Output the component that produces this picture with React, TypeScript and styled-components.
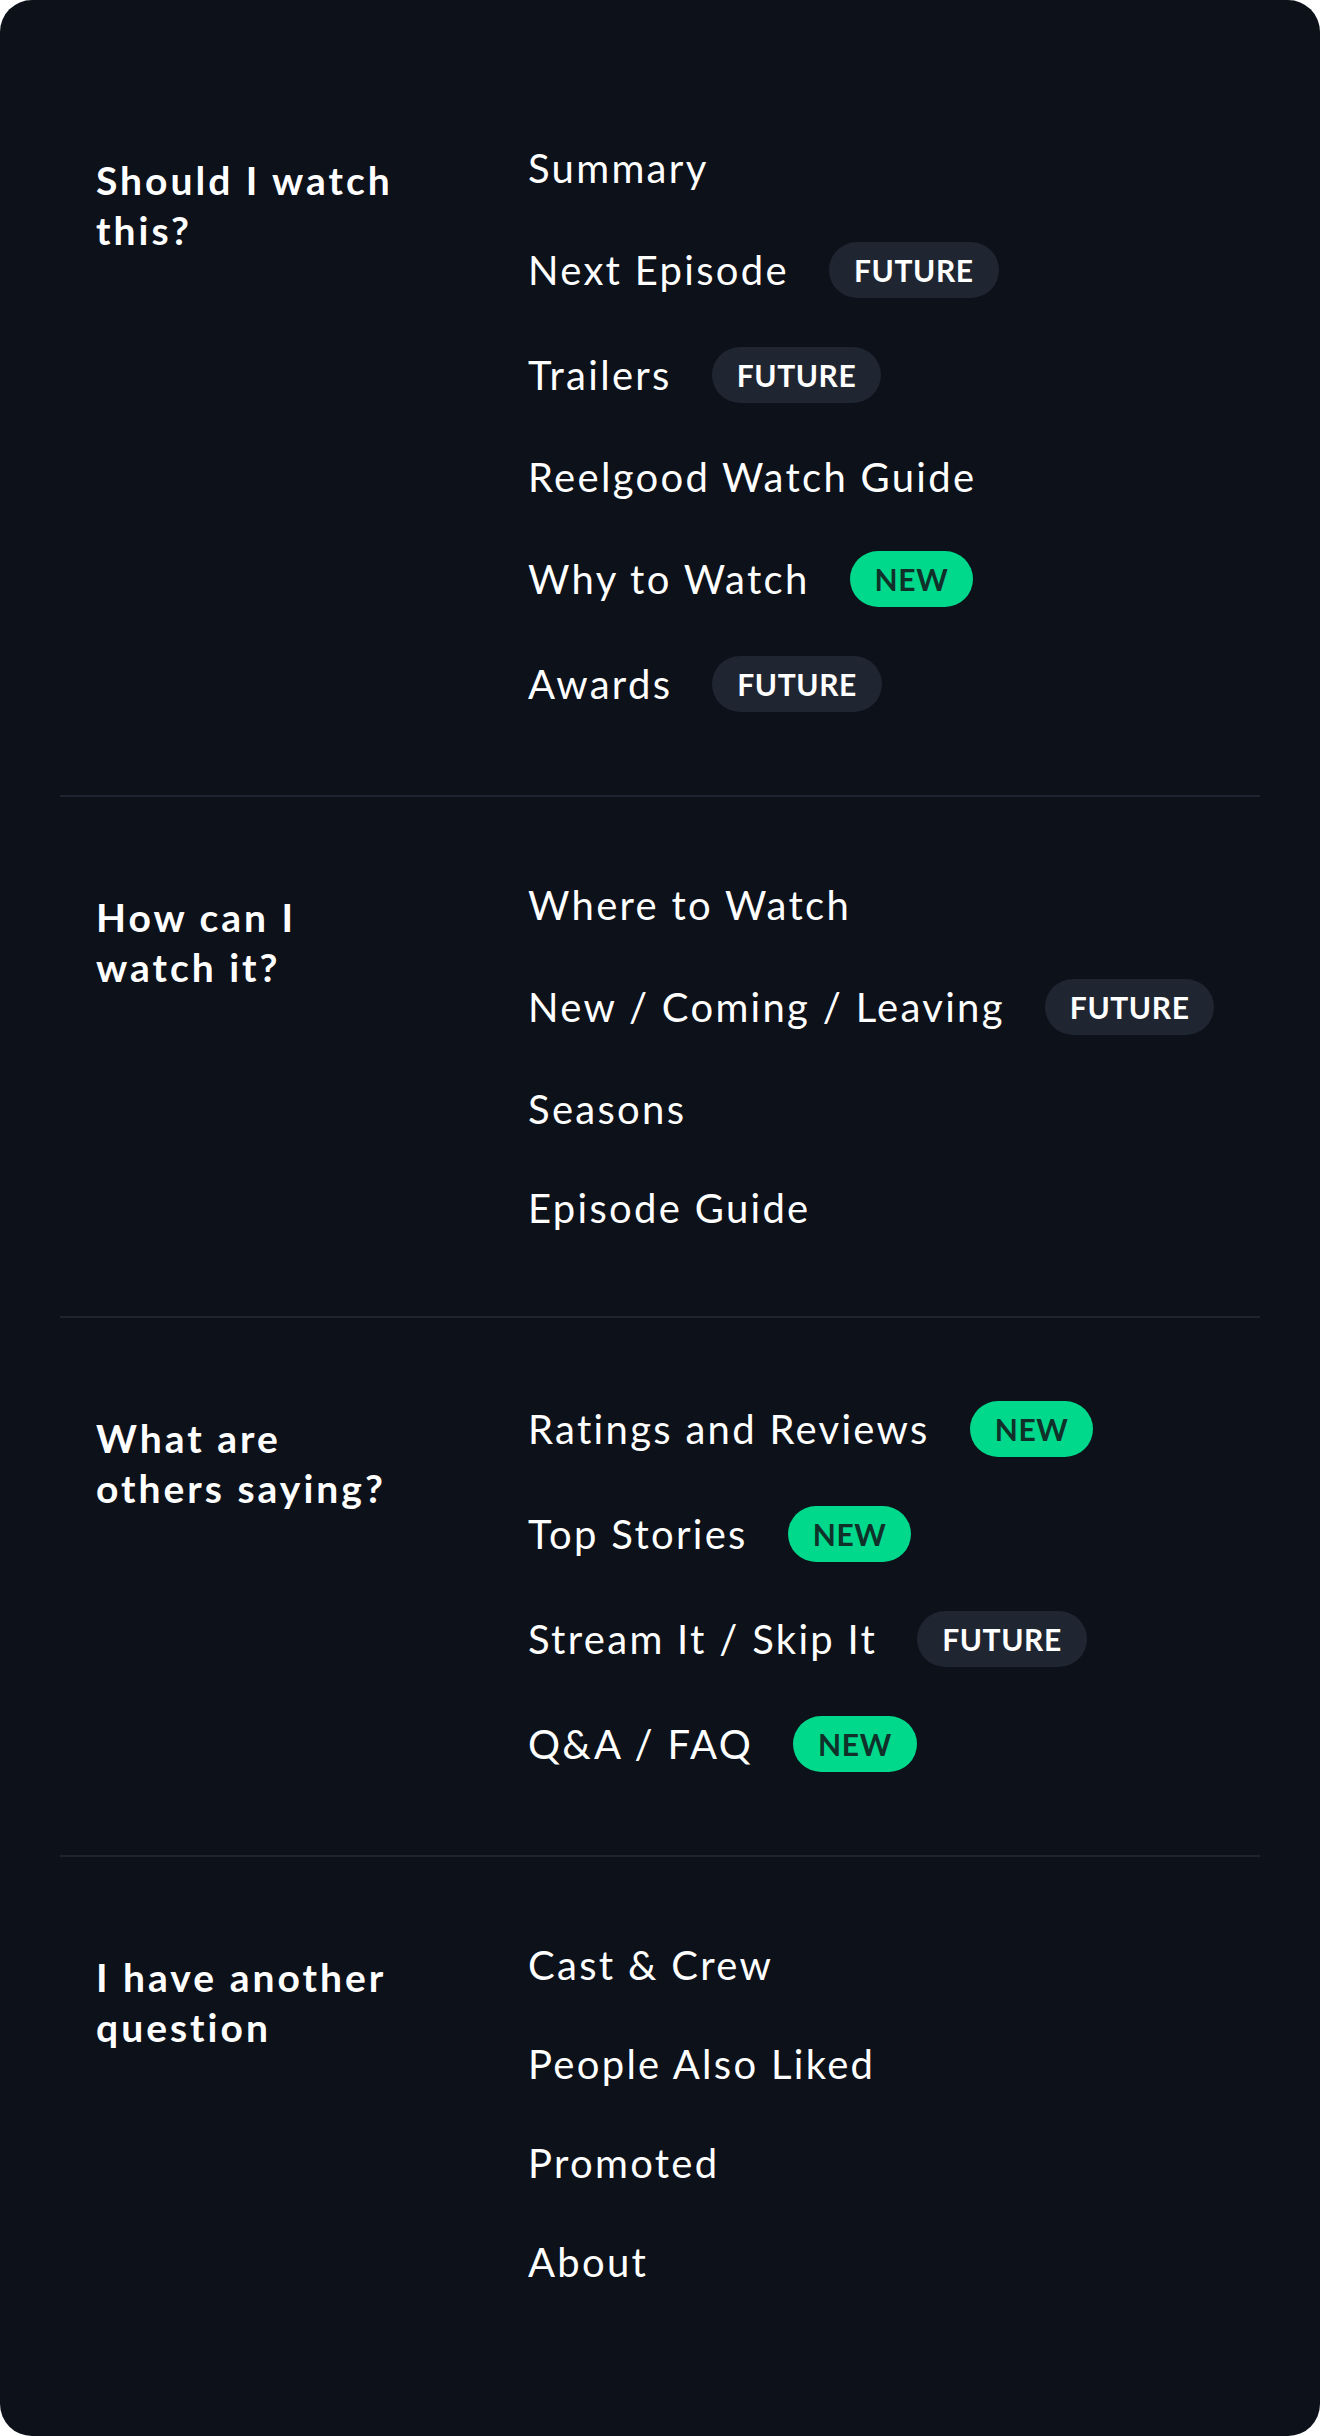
import React from 'react';
import styled, { createGlobalStyle } from 'styled-components';

const GlobalStyle = createGlobalStyle`
    html, body {
        margin: 0;
        padding: 0;
        background: #ffffff;
    }
    body {
        font-family: Lato, "Open Sans", sans-serif;
        -webkit-font-smoothing: antialiased;
    }
`;

type BadgeKind = 'new' | 'future';

interface NavItem {
    label: string;
    badge?: BadgeKind;
}

interface NavSection {
    title: string;
    items: NavItem[];
}

const SECTIONS: NavSection[] = [
    {
        title: 'Should I watch\nthis?',
        items: [
            { label: 'Summary' },
            { label: 'Next Episode', badge: 'future' },
            { label: 'Trailers', badge: 'future' },
            { label: 'Reelgood Watch Guide' },
            { label: 'Why to Watch', badge: 'new' },
            { label: 'Awards', badge: 'future' },
        ],
    },
    {
        title: 'How can I\nwatch it?',
        items: [
            { label: 'Where to Watch' },
            { label: 'New / Coming / Leaving', badge: 'future' },
            { label: 'Seasons' },
            { label: 'Episode Guide' },
        ],
    },
    {
        title: 'What are\nothers saying?',
        items: [
            { label: 'Ratings and Reviews', badge: 'new' },
            { label: 'Top Stories', badge: 'new' },
            { label: 'Stream It / Skip It', badge: 'future' },
            { label: 'Q&A / FAQ', badge: 'new' },
        ],
    },
    {
        title: 'I have another\nquestion',
        items: [
            { label: 'Cast & Crew' },
            { label: 'People Also Liked' },
            { label: 'Promoted' },
            { label: 'About' },
        ],
    },
];

const Card = styled.div`
    box-sizing: border-box;
    min-height: 2436px;
    padding: 60px 60px;
    background: #0c111a;
    border-radius: 32px;
`;

const Section = styled.section`
    display: grid;
    grid-template-columns: 432px 1fr;
    padding: 83px 36px;

    & + & {
        border-top: 2px solid #1f2530;
    }
`;

const Heading = styled.h3`
    margin: 12px 0 0;
    color: #ffffff;
    font-size: 39px;
    line-height: 50px;
    font-weight: 700;
    letter-spacing: 3px;
    white-space: pre-line;
`;

const ItemList = styled.ul`
    display: flex;
    flex-direction: column;
    gap: 49px;
    margin: 0;
    padding: 0;
    list-style: none;
`;

const Item = styled.li`
    display: flex;
    align-items: center;
    gap: 40px;
    min-height: 50px;
`;

const ItemLabel = styled.span`
    color: #ffffff;
    font-size: 40px;
    line-height: 50px;
    font-weight: 400;
    letter-spacing: 2.3px;
`;

const Badge = styled.span<{ $kind: BadgeKind }>`
    display: inline-flex;
    align-items: center;
    height: 56px;
    padding: 0 25px;
    border-radius: 28px;
    box-sizing: border-box;
    font-size: 30px;
    font-weight: 700;
    letter-spacing: 0.6px;
    background: ${props => (props.$kind === 'new' ? '#00d98b' : '#1f2631')};
    color: ${props => (props.$kind === 'new' ? '#10302a' : '#ffffff')};
`;

const App = () => (
    <>
        <GlobalStyle />
        <Card>
            {SECTIONS.map(section => (
                <Section key={section.title}>
                    <Heading>{section.title}</Heading>
                    <ItemList>
                        {section.items.map(item => (
                            <Item key={item.label}>
                                <ItemLabel>{item.label}</ItemLabel>
                                {item.badge && (
                                    <Badge $kind={item.badge}>
                                        {item.badge === 'new' ? 'NEW' : 'FUTURE'}
                                    </Badge>
                                )}
                            </Item>
                        ))}
                    </ItemList>
                </Section>
            ))}
        </Card>
    </>
);

export default App;
